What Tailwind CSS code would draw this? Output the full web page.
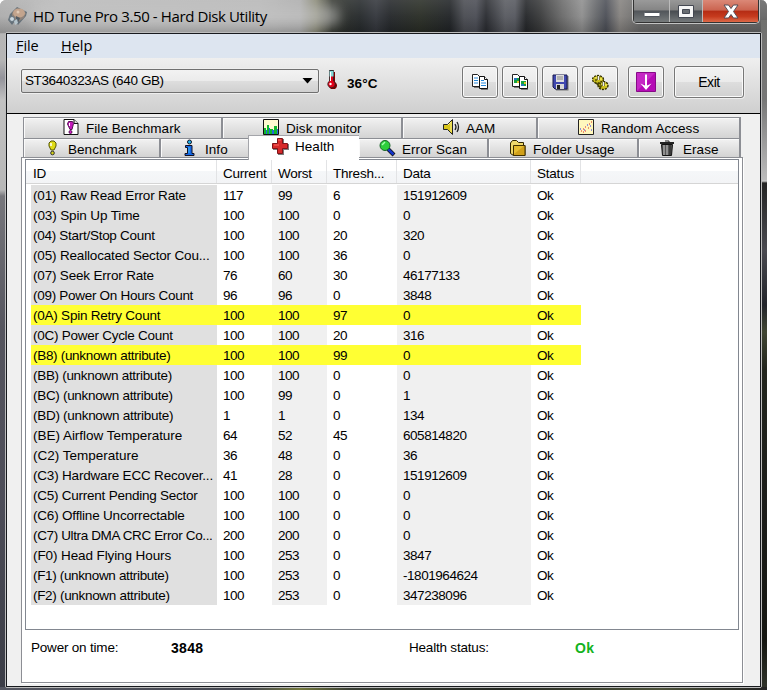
<!DOCTYPE html>
<html lang="en"><head><meta charset="utf-8"><title>HD Tune Pro</title>
<script src="https://cdn.jsdelivr.net/npm/@tailwindcss/browser@4"></script></head>
<body class="w-[767px] h-[690px] overflow-hidden font-['Liberation_Sans',sans-serif] text-[13px] text-black">
<div class="relative w-[767px] h-[690px] px-[5px] overflow-hidden rounded-t-[6px] bg-[linear-gradient(180deg,#b7b7b7_0,#b5b5b5_60px,#93939a_78px,#c2c2c2_100px,#b7b7b7_190px,#77777c_196px,#55555e_330px,#4d4d58_500px,#3b3d46_690px)]">
 <!-- glass backdrop -->
 <div class="absolute left-0 top-0 w-[767px] h-[34px] bg-[linear-gradient(90deg,#acacac_0,#b9b9b9_60px,#b5b5b5_260px,#aaa_300px,#83836f_316px,#30332c_332px,#25292b_360px,#33363c_376px,#24272a_390px,#292d25_420px,#202326_450px,#494b51_464px,#4a4c54_476px,#292b30_486px,#585a60_505px,#55575e_515px,#242629_526px,#38393a_540px,#696969_562px,#8e8e8e_582px,#65676a_596px,#4b4e56_606px,#85827f_620px,#696969_640px,#666_767px)]"></div>
 <div class="absolute left-0 top-0 w-[767px] h-[33px] bg-[linear-gradient(180deg,rgba(255,255,255,.12)_0,rgba(255,255,255,.04)_50%,rgba(0,0,0,.18)_100%)]"></div>
 <div class="absolute left-[30px] top-[5px] w-[310px] h-[22px] rounded-full bg-[#c8c8c8]/55 blur-[6px]"></div>
 <div class="absolute left-[761px] top-[20px] w-[6px] h-[670px] bg-[linear-gradient(180deg,#70706e_0,#777_80px,#bcbcbc_160px,#d0d0d0_161px,#252525_163px,#4a4a50_230px,#22242a_285px,#414633_312px,#22251d_350px,#1c1d1a_480px,#151611_620px,#30342a_670px)]"></div>
 <div class="absolute left-0 top-[687px] w-[767px] h-[3px] bg-[linear-gradient(90deg,#555761,#444650_250px,#73783c_300px,#3a3f35_350px,#252822_500px,#4d523a_660px,#222_767px)]"></div>
 <!-- title bar -->
 <header class="relative flex h-[32px] items-center">
  <svg class="ml-[2px] -mt-px" width="21" height="22" viewBox="0 0 21 22"><path d="M3 9 10 2 20 7 19 11 11 20 8 16 5 20 1 15Z" fill="#65717a"/><path d="M5 8 10 3 19 8 17 13 11 17 5 13Z" fill="#8f8279"/><ellipse cx="12" cy="8" rx="6" ry="4.5" fill="#c3a48d"/><circle cx="11" cy="7" r="1.5" fill="#e0cab6"/><path d="m9 11 4 2-2 5-2-3Z" fill="#535c64"/><circle cx="5" cy="14" r="2.5" fill="#cbd7df" stroke="#65737d"/><path d="m7 16 3-2 1 4-3 2Z" fill="#b5c4cc"/></svg>
  <h1 class="ml-[5px] -mt-px font-['Open_Sans','Noto_Sans',sans-serif] text-[15px] leading-[20px] whitespace-nowrap tracking-[-0.39px]">HD Tune Pro 3.50 - Hard Disk Utility</h1>
 </header>
 <div class="absolute left-[632px] top-0 flex w-[128px] h-[24px] rounded-b-[5px] border border-t-0 border-[#c3c3c3] bg-[#333] p-px pt-0 overflow-hidden">
  <div class="flex items-center justify-center w-[35px] bg-[linear-gradient(180deg,#9a9a9a_0,#858585_45%,#51555a_50%,#777b7c_100%)]"><svg width="18" height="8" class="mt-[8px]" viewBox="0 0 18 8"><rect x="1" y="1.500" width="16" height="4" rx="1" fill="#fff" stroke="#50555d"/></svg></div>
  <div class="flex items-center justify-center w-[33px] border-l border-[#bbb] bg-[linear-gradient(180deg,#989898_0,#808080_45%,#484c51_50%,#74787a_100%)]"><svg width="18" height="15" viewBox="0 0 18 15"><path d="M1.500 1.500h15v12h-15z" fill="#f5f5f5" stroke="#444852"/><path d="M5.500 5.500h7v4h-7z" fill="#686c71" stroke="#444852"/></svg></div>
  <div class="flex flex-1 items-center justify-center border-l border-[#bbb] bg-[linear-gradient(180deg,#db8877_0,#cb6551_45%,#b62d15_52%,#c63b1e_75%,#dd6948_100%)]"><svg width="18" height="15" viewBox="0 0 18 15"><path d="M2 1h4.500L9 4.500 11.500 1H16L11.500 7.500 16 14h-4.500L9 10.500 6.500 14H2l4.500-6.500Z" fill="#fff" stroke="#554e58"/></svg></div>
 </div>
 <!-- client area -->
 <main class="relative w-[757px] h-[656px] border border-[#bcbcbc] rounded-[2px]"><div class="w-[755px] h-[654px] border border-[#17191d] bg-[#f0f0f0]">
  <nav class="flex h-[24px] items-center bg-[#dde5f0] font-['Open_Sans','Noto_Sans',sans-serif] text-[14.5px] pl-[9px] leading-[24px]"><span class="w-[45px] tracking-[-0.1px]"><u>F</u>ile</span><span><u>H</u>elp</span></nav>
  <section class="flex h-[56px] items-start border-b border-black bg-linear-to-b from-[#efefef] to-[#cfcfcf] pl-[14px] pt-[8px]">
   <div class="mt-[3px] flex h-[24px] w-[298px] items-center justify-between rounded-[2px] border border-[#707070] bg-[linear-gradient(180deg,#f2f2f2_0,#ebebeb_49%,#dedede_50%,#d0d0d0_100%)] shadow-[0_0_0_1px_#eee] pl-[3px] pr-[5px] whitespace-nowrap"><span class="text-[13.5px] tracking-[-0.38px]">ST3640323AS (640 GB)</span><svg width="11" height="6" viewBox="0 0 11 6"><path d="M.5 0h10L5.500 5.500Z"/></svg></div>
   <svg class="ml-[7px] mt-[4px]" width="11" height="19" viewBox="0 0 11 19"><path d="M4 1h4v10a4 4 0 1 1-4 0Z" transform="translate(1 1)" fill="#700"/><path d="M3.500.500h4v10.500a3.700 3.700 0 1 1-4 0Z" fill="#e00018" stroke="#222" stroke-width=".8"/><path d="M3.500.500h4v6h-4Z" fill="#85d9d9"/><path d="M3.500.500h4" stroke="#333"/><path d="M4.500 2v9" stroke="#fff"/><circle cx="4.500" cy="14" r="1.200" fill="#fff"/></svg>
   <b class="w-[40px] ml-[10px] mt-[9px] leading-[17px] text-[13.5px] tracking-[.1px]">36°C</b>
   <div class="ml-[75px] flex gap-[4px]">
    <button class="grid place-items-center w-[36px] h-[32px] rounded-[3px] border border-[#777] bg-[linear-gradient(180deg,#f2f2f2_0,#ebebeb_49%,#dedede_50%,#d0d0d0_100%)] shadow-[inset_0_0_0_1px_#fafafa,0_0_0_1px_#eee]"><svg width="17" height="16" viewBox="0 0 17 16" fill="#fff"><path d="M2 3h7v11H2zM9 5h7v11H9z" fill="#777"/><path d="M.5.500h5l3 3v9H.5z" stroke="#222"/><path d="M7.500 2.500h5l3 3v9h-8z" stroke="#111"/><path d="M2 4h4M2 6.500h4M2 9h4M9 6.500h3M9 9h5M9 11.500h5" stroke="#2687d8"/><path d="M12.500 2.500v3h3" stroke="#111"/></svg></button>
    <button class="grid place-items-center w-[36px] h-[32px] rounded-[3px] border border-[#777] bg-[linear-gradient(180deg,#f2f2f2_0,#ebebeb_49%,#dedede_50%,#d0d0d0_100%)] shadow-[inset_0_0_0_1px_#fafafa,0_0_0_1px_#eee]"><svg width="17" height="16" viewBox="0 0 17 16" fill="#fff"><path d="M2 3h7v11H2zM9 5h7v11H9z" fill="#777"/><path d="M.5.500h5l3 3v9H.5z" stroke="#222"/><path d="M7.500 2.500h5l3 3v9h-8z" stroke="#111"/><path d="M2 4h5v5H2zM9 7h5v5H9z" fill="#15a33e"/><path d="M2 4h3v2H2zM9 10h3v2H9z" fill="#2677bd"/><path d="M5 7h2v2H5zM12 8h2v2h-2z" fill="#e0c527"/><path d="M12.500 2.500v3h3" stroke="#111"/></svg></button>
    <button class="grid place-items-center w-[36px] h-[32px] rounded-[3px] border border-[#777] bg-[linear-gradient(180deg,#f2f2f2_0,#ebebeb_49%,#dedede_50%,#d0d0d0_100%)] shadow-[inset_0_0_0_1px_#fafafa,0_0_0_1px_#eee]"><svg width="17" height="17" viewBox="0 0 17 17"><path d="M2 2h14.500v14.500H4Z" fill="#777"/><path d="M1 1h14v14H3l-2-2Z" fill="#4048b0" stroke="#181b4d"/><path d="M4 1h8v7H4Z" fill="#ddd"/><path d="M5 3h6M5 5h6" stroke="#888"/><path d="M4 10h8v5H4Z" fill="#d8d8d8"/><path d="M5 11h3v4H5Z" fill="#222"/></svg></button>
    <button class="grid place-items-center w-[36px] h-[32px] rounded-[3px] border border-[#777] bg-[linear-gradient(180deg,#f2f2f2_0,#ebebeb_49%,#dedede_50%,#d0d0d0_100%)] shadow-[inset_0_0_0_1px_#fafafa,0_0_0_1px_#eee]"><svg width="17" height="17" viewBox="0 0 17 17"><ellipse cx="6" cy="5.500" rx="5.500" ry="4" fill="#c9bd1e" stroke="#2d2a00" stroke-width="1.300" stroke-dasharray="2 1"/><ellipse cx="11" cy="11.500" rx="5" ry="4" fill="#c9bd1e" stroke="#2d2a00" stroke-width="1.300" stroke-dasharray="2 1"/><path d="m3 8 6 6M6 9l4 1M4 4v3M9 10v3" stroke="#4a4500" stroke-width="1.300"/><path d="M3 4h2M8 5h2M9 10h2M13 11h2" stroke="#f6ef58" stroke-width="1.500"/><path d="M6.500 2v4M11.500 8v4" stroke="#555" stroke-width="2.200"/><path d="M6.500 2v4M11.500 8v4" stroke="#eee"/></svg></button>
    <button class="ml-[6px] grid place-items-center w-[36px] h-[32px] rounded-[3px] border border-[#777] bg-[linear-gradient(180deg,#f2f2f2_0,#ebebeb_49%,#dedede_50%,#d0d0d0_100%)] shadow-[inset_0_0_0_1px_#fafafa,0_0_0_1px_#eee]"><svg width="20" height="20" viewBox="0 0 20 20"><path d="M.5.500h19v19H.5z" fill="#b50bb5" stroke="#860a87"/><path d="M1 1h18L1 19Z" fill="#d545d6" opacity=".5"/><path d="M10 2.500V14" stroke="#fff" stroke-width="2"/><path d="M4.500 11.500 10 14l5.500-2.500L10 18Z" fill="#fff"/></svg></button>
    <button class="ml-[6px] w-[70px] h-[32px] rounded-[3px] border border-[#777] bg-[linear-gradient(180deg,#f2f2f2_0,#ebebeb_49%,#dedede_50%,#d0d0d0_100%)] shadow-[inset_0_0_0_1px_#fafafa,0_0_0_1px_#eee] text-[14px] tracking-[-0.4px]">Exit</button>
   </div>
  </section>
  <section class="pl-[14px] pt-[3px]">
   <div id="tabs1" class="ml-[2px] flex w-[718px] h-[21px] border-l border-t border-[#8c8e94] whitespace-nowrap text-[13.5px] tracking-[.05px]"></div>
   <div id="tabs2" class="ml-[2px] flex w-[718px] h-[19px] border-l border-t border-[#8c8e94] whitespace-nowrap text-[13.5px] tracking-[.05px]"></div>
   <div class="w-[722px] h-[526px] border border-[#8c8e94] bg-white pl-[3px] pt-px shadow-[1px_1px_0_#fff]">
    <div class="w-[714px] h-[471px] border border-[#828790]">
     <div id="head" class="flex h-[24px] border-b border-[#d5d5d5] bg-[linear-gradient(180deg,#fff_0,#fff_48%,#f5f7f9_50%,#f3f4f6_100%)] pl-[5px] leading-[27px] whitespace-nowrap text-[13.5px] tracking-[-0.22px]"></div>
     <div id="rows" class="pt-px pl-[5px] whitespace-nowrap text-[13.5px]"></div>
    </div>
    <div class="flex h-[37px] items-center pl-[6px] pr-[5px]"><span class="w-[140px] text-[13.5px] tracking-[-0.2px]">Power on time:</span><b class="w-[238px] text-[14px] tracking-[.3px]">3848</b><span class="w-[166px] text-[13.5px] tracking-[-0.2px]">Health status:</span><b class="text-[14px] text-[#13b321] tracking-[.3px]">Ok</b></div>
   </div>
  </section>
 </div></main>
</div>
<script>
const icons={
file:'<path d="M1 .5h10l4 4v11H1z" fill="#fff" stroke="#111"/><path d="M11 .5v4h4" fill="#ddd" stroke="#111"/><path d="M5.500 2.500h4l1 2-1.500 6H7L4.500 5z" fill="#c518bb" stroke="#571256"/><path d="M6.500 4v3" stroke="#fff"/><circle cx="7.500" cy="13" r="1.500" fill="#d518cb" stroke="#571256"/>',
mon:'<path d="M.5.500h15v15H.5z" fill="#fffbd0" stroke="#111"/><path d="M1 9h2v6H1zM4 6h2v9H4zM7 10h3v5H7zM11 7h3v8h-3z" fill="#11b92c"/><path d="M3 11h1v4H3zM6 9h1v6H6zM9 11h2v4H9zM14 10h1v5h-1z" fill="#2669dc"/>',
aam:'<path d="M.5 5.500h4l5-5v15l-5-5h-4z" fill="#d8c51c" stroke="#222"/><path d="m5 6 3-3v10" stroke="#fff38a" fill="none"/><path d="M12 5q2 3 0 6M14 3q3 5 0 10" fill="none" stroke="#222" stroke-width="1.300"/>',
rand:'<path d="M.5.500h15v15H.5z" fill="#fff7bd" stroke="#222"/><path d="M3 12h1M5 10h1M7 12h1M7 8h1M10 9h1M11 5h1M13 3h1M5 13h1" stroke="#d22"/><path d="M2 10h1M6 11h1M9 6h1M12 7h1M13 11h1" stroke="#22f"/>',
bench:'<path d="M5 3 7 1h3l2 2v3l-2 4H7L5 6Z" fill="#dfdb15" stroke="#555606"/><path d="M7 3v3" stroke="#fff" stroke-width="1.500"/><circle cx="8.500" cy="13" r="1.800" fill="#d5d315" stroke="#333"/>',
info:'<circle cx="8.500" cy="2" r="2" fill="#20b6ee" stroke="#112"/><path d="M4.500 5.500h6.500v8h2v2H4v-2h2.500v-6h-2z" fill="#1467e5" stroke="#112"/><path d="M8 7v6" stroke="#39baff"/>',
health:'<path d="M6 1h6v5h5v6h-5v5H6v-5H1V6h5z" fill="#444" opacity=".7"/><path d="M5.500.500h5v5h5v5h-5v5h-5v-5h-5v-5h5z" fill="#d62a2a" stroke="#801318"/><path d="M6 2h3M2 7h5" stroke="#ff6960"/>',
err:'<path d="m9 9 6 6" stroke="#111" stroke-width="4"/><path d="m9 9 5.500 5.500" stroke="#1535cc" stroke-width="2.500"/><circle cx="6" cy="5.500" r="5" fill="#2dce3c" stroke="#186326"/><path d="m3 5 3-3" stroke="#a3ffae" stroke-width="1.500"/>',
folder:'<path d="M.5 3 2.500.500h4l2 2h5v3h1.500V15.500H3.500l-3-2z" fill="#efd96c" stroke="#302600"/><path d="M3.500 5.500h11.500v10H3.500z" fill="#d0a01a" stroke="#403000"/><path d="M4 6h10L4 14z" fill="#efc93a" opacity=".7"/>',
erase:'<path d="M6 1h4v2" fill="none" stroke="#222"/><path d="M1 3h14" stroke="#222" stroke-width="2"/><path d="M2.500 4.500h11l-1 11h-9z" fill="#555" stroke="#111"/><path d="M5 5v10M8 5v10" stroke="#ccc"/><path d="M11 5v10" stroke="#222"/>'};
const svg=n=>`<svg class="absolute left-0 top-0 overflow-visible" width="16" height="16" viewBox="0 0 16 16">${icons[n]}</svg>`;
// width, icon, icon left inset, gap before label, label
const tabs=(id,a)=>document.getElementById(id).innerHTML=a.map(([w,n,l,g,t])=>n==='health'
?`<div class="relative shrink-0" style="width:${w}px"><div class="absolute -left-[2px] -top-[4px] w-[111px] h-[25px] z-10 bg-white border-l border-t border-[#a4a5aa] pl-[23px] flex pt-[2px]"><span class="relative w-[16px] h-[16px]">${svg(n)}</span><span class="ml-[7px] leading-[18px]">${t}</span></div></div>`
:`<div class="flex shrink-0 border-r-2 border-[#8c8e94] bg-linear-to-b from-[#f2f2f2] to-[#d3d3d3] shadow-[inset_1px_1px_0_#fafafa]" style="width:${w}px;padding-left:${l}px"><span class="relative w-[16px] h-[16px] mt-px">${svg(n)}</span><span class="leading-[21px]" style="margin-left:${g}px">${t}</span></div>`).join('');
tabs('tabs1',[[199,'file',39,7,'File Benchmark'],[180,'mon',40,7,'Disk monitor'],[135,'aam',40,7,'AAM'],[203,'rand',40,7,'Random Access']]);
tabs('tabs2',[[137,'bench',20,8,'Benchmark'],[89,'info',20,8,'Info'],[109,'health',0,0,'Health'],[130,'err',20,7,'Error Scan'],[150,'folder',21,7,'Folder Usage'],[102,'erase',20,8,'Erase']]);
const W=[186,55,55,70,134,50];
document.getElementById('head').innerHTML=['ID','Current','Worst','Thresh...','Data','Status'].map((t,i)=>`<div class="border-r border-[#e2e3e5] h-[23px] shrink-0" style="width:${W[i]}px;padding-left:${i?6:2}px">${t}</div>`).join('');
// name | letter spacing | current | worst | threshold | data
const data=`(01) Raw Read Error Rate|-.16|117|99|6|151912609
(03) Spin Up Time|-.12|100|100|0|0
(04) Start/Stop Count|-.28|100|100|20|320
(05) Reallocated Sector Cou...|-.17|100|100|36|0
(07) Seek Error Rate|-.18|76|60|30|46177133
(09) Power On Hours Count|-.29|96|96|0|3848
(0A) Spin Retry Count|-.23|100|100|97|0
(0C) Power Cycle Count|-.26|100|100|20|316
(B8) (unknown attribute)|-.31|100|100|99|0
(BB) (unknown attribute)|-.31|100|100|0|0
(BC) (unknown attribute)|-.31|100|99|0|1
(BD) (unknown attribute)|-.29|1|1|0|134
(BE) Airflow Temperature|-.02|64|52|45|605814820
(C2) Temperature|0|36|48|0|36
(C3) Hardware ECC Recover...|-.19|41|28|0|151912609
(C5) Current Pending Sector|-.24|100|100|0|0
(C6) Offline Uncorrectable|-.19|100|100|0|0
(C7) Ultra DMA CRC Error Co...|-.37|200|200|0|0
(F0) Head Flying Hours|-.1|100|253|0|3847
(F1) (unknown attribute)|-.35|100|253|0|-1801964624
(F2) (unknown attribute)|-.31|100|253|0|347238096`.split('\n').map(r=>r.split('|'));
const col=['bg-[#e0e0e0]','','bg-[#f0f0f0]','','bg-[#f0f0f0]',''];
document.getElementById('rows').innerHTML=data.map(([name,sp,...rest],n)=>`<div class="flex h-[20px] w-[550px] leading-[21px] ${n==6||n==8?'bg-[#ffff33]':''}">`+[`<span style="letter-spacing:${sp}px">${name}</span>`,...rest,'Ok'].map((t,i)=>`<div class="shrink-0 ${n==6||n==8?'':col[i]} ${i?'tracking-[-0.45px]':''}" style="width:${W[i]}px;padding-left:${i?6:2}px">${t}</div>`).join('')+'</div>').join('');
</script>
</body></html>
